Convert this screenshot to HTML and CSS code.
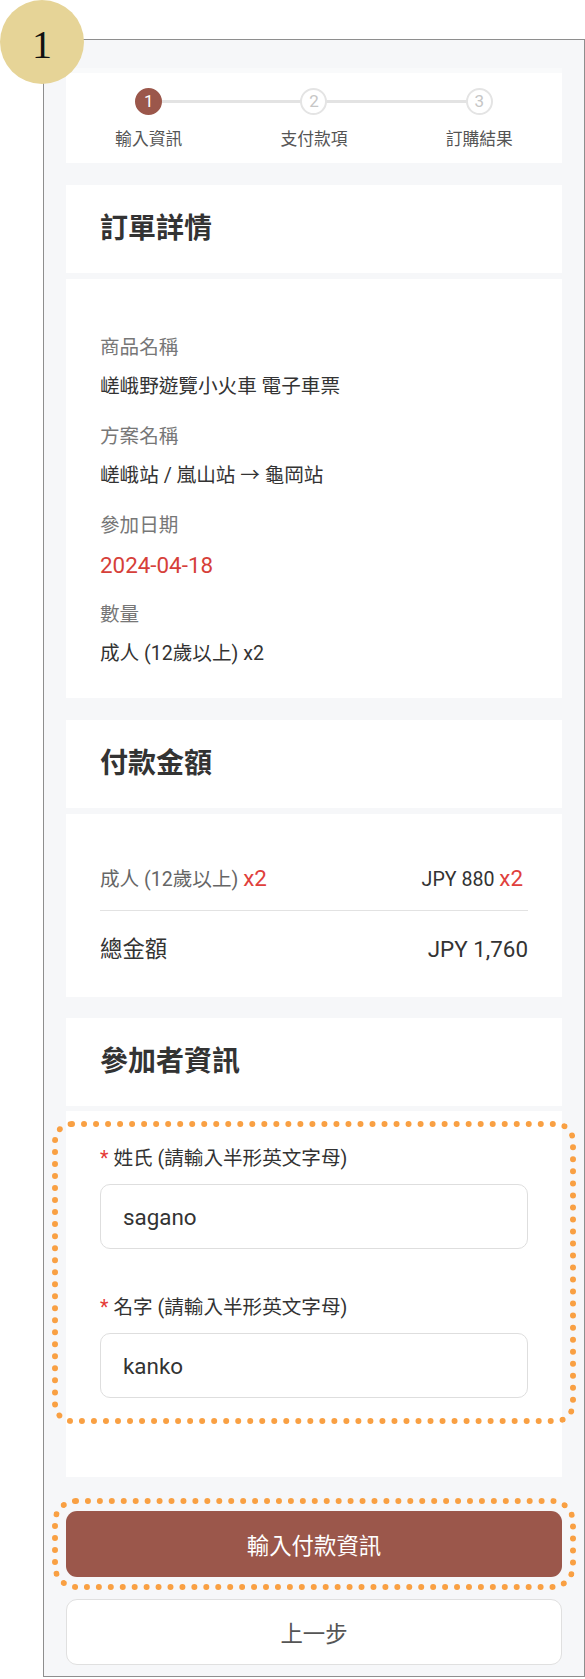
FILE: index.html
```html
<!DOCTYPE html>
<html lang="zh-Hant">
<head>
<meta charset="utf-8">
<title>輸入資訊</title>
<link rel="stylesheet" href="styles.css">
</head>
<body>
<div class="page">
  <div class="badge">1</div>
  <div class="frame">
    <div class="card stepper">
      <div class="step active"><span class="dot">1</span><span class="step-label">輸入資訊</span></div>
      <div class="step"><span class="dot">2</span><span class="step-label">支付款項</span></div>
      <div class="step"><span class="dot">3</span><span class="step-label">訂購結果</span></div>
    </div>

    <section class="section">
      <h2 class="card section-title">訂單詳情</h2>
      <div class="card details">
        <div class="item">
          <div class="item-label">商品名稱</div>
          <div class="item-value">嵯峨野遊覽小火車 電子車票</div>
        </div>
        <div class="item">
          <div class="item-label">方案名稱</div>
          <div class="item-value">嵯峨站 / 嵐山站 → 龜岡站</div>
        </div>
        <div class="item">
          <div class="item-label">參加日期</div>
          <div class="item-value date">2024-04-18</div>
        </div>
        <div class="item">
          <div class="item-label">數量</div>
          <div class="item-value">成人 (12歲以上) x2</div>
        </div>
      </div>
    </section>

    <section class="section section-price">
      <h2 class="card section-title">付款金額</h2>
      <div class="card price">
        <div class="price-row">
          <span class="name">成人 (12歲以上) <span class="qty">x2</span></span>
          <span class="amount">JPY 880 <span class="qty">x2</span></span>
        </div>
        <div class="total-row">
          <span>總金額</span>
          <span>JPY 1,760</span>
        </div>
      </div>
    </section>

    <section class="section section-last">
      <h2 class="card section-title">參加者資訊</h2>
      <div class="card form">
        <div class="fields">
          <label class="field">
            <span class="field-label"><span class="req">*</span>姓氏 (請輸入半形英文字母)</span>
            <input class="field-input" type="text" value="sagano">
          </label>
          <label class="field">
            <span class="field-label"><span class="req">*</span>名字 (請輸入半形英文字母)</span>
            <input class="field-input" type="text" value="kanko">
          </label>
        </div>
      </div>
    </section>

    <button class="btn btn-primary" type="button">輸入付款資訊</button>
    <button class="btn btn-secondary" type="button">上一步</button>
  </div>
</div>
</body>
</html>
```

FILE: styles.css
```css
* {
  box-sizing: border-box;
}

body {
  margin: 0;
  background: #ffffff;
  font-family: Roboto, "Noto Sans CJK TC", sans-serif;
  color: #333333;
}

.page {
  position: relative;
  padding: 39px 0 0 43px;
}

.badge {
  position: absolute;
  left: 0;
  top: 0;
  width: 84px;
  height: 84px;
  border-radius: 50%;
  background: #e6d497;
  display: flex;
  align-items: center;
  justify-content: center;
  padding-top: 6px;
  font-family: "Liberation Serif", serif;
  font-size: 40px;
  line-height: 1;
  color: #111111;
  z-index: 2;
}

.frame {
  width: 542px;
  border: 1px solid #8e8e8e;
  background: #f6f7f9;
  padding: 28px 22px 11px;
  display: flex;
  flex-direction: column;
}

.card {
  background: #ffffff;
}

/* Stepper */
.stepper {
  display: flex;
  border-top: 5px solid #f9fafb;
  padding: 15px 0 12px;
  margin-bottom: 22px;
}

.step {
  flex: 1;
  position: relative;
  display: flex;
  flex-direction: column;
  align-items: center;
}

.step + .step::before {
  content: "";
  position: absolute;
  top: 12px;
  left: -50%;
  right: 50%;
  height: 3px;
  background: #e3e3e3;
}

.dot {
  position: relative;
  z-index: 1;
  width: 27px;
  height: 27px;
  border-radius: 50%;
  border: 2px solid #e4e4e4;
  background: #ffffff;
  color: #c6c6c6;
  font-size: 17px;
  line-height: 1;
  display: flex;
  align-items: center;
  justify-content: center;
}

.step.active .dot {
  background: #9b574b;
  border-color: #9b574b;
  color: #ffffff;
}

.step-label {
  margin-top: 12px;
  font-size: 16.8px;
  line-height: 24px;
  color: #555555;
}

/* Sections */
.section {
  display: flex;
  flex-direction: column;
  gap: 6px;
  margin-bottom: 22px;
}

.section-price {
  margin-bottom: 21px;
}

.section-last {
  gap: 5px;
  margin-bottom: 34px;
}

.section-title {
  margin: 0;
  height: 88px;
  padding: 0 34px;
  display: flex;
  align-items: center;
  font-size: 28px;
  line-height: 40px;
  font-weight: 700;
  color: #333333;
}

/* Order details */
.details {
  padding: 55px 34px 30px;
  display: flex;
  flex-direction: column;
  gap: 22px;
}

.item-label {
  font-size: 19.6px;
  line-height: 28px;
  color: #777777;
}

.item-value {
  margin-top: 11px;
  font-size: 19.6px;
  line-height: 28px;
  color: #333333;
}

.item-value.date {
  color: #d63f3a;
  font-size: 22.4px;
}

/* Price */
.price {
  padding: 50px 34px 33px;
}

.price-row {
  display: flex;
  justify-content: space-between;
  align-items: baseline;
  line-height: 28px;
  padding: 0 5px 16px 0;
  border-bottom: 1px solid #e2e2e2;
  font-size: 19.6px;
}

.price-row .name {
  color: #666666;
}

.price-row .amount {
  color: #333333;
}

.qty {
  color: #e0403c;
  font-size: 22.4px;
}

.total-row {
  display: flex;
  justify-content: space-between;
  padding-top: 23px;
  line-height: 30px;
  font-size: 22.4px;
  color: #333333;
}

/* Form */
.form {
  padding: 34px 34px 79px;
}

.fields {
  position: relative;
  display: flex;
  flex-direction: column;
  gap: 45px;
}

.fields::after {
  content: "";
  position: absolute;
  top: -24px;
  bottom: -26px;
  left: -48px;
  right: -48px;
  border: 6px dotted #f9a043;
  border-radius: 20px;
  pointer-events: none;
}

.field {
  display: flex;
  flex-direction: column;
}

.field-label {
  font-size: 19.6px;
  line-height: 28px;
  color: #333333;
}

.req {
  color: #e53935;
  margin-right: 5px;
}

.field-input {
  margin-top: 11px;
  height: 65px;
  width: 100%;
  border: 1px solid #dedede;
  border-radius: 10px;
  padding: 0 22px;
  background: #ffffff;
  font-family: inherit;
  font-size: 22.4px;
  color: #333333;
  outline: none;
}

/* Buttons */
.btn {
  width: 100%;
  height: 66px;
  border-radius: 11px;
  display: flex;
  align-items: center;
  justify-content: center;
  font-family: inherit;
  font-size: 22.4px;
  padding: 0;
}

.btn-primary {
  position: relative;
  background: #9b574b;
  color: #ffffff;
  border: none;
  margin-bottom: 22px;
}

.btn-primary::after {
  content: "";
  position: absolute;
  top: -13px;
  bottom: -13px;
  left: -14px;
  right: -14px;
  border: 6px dotted #f9a043;
  border-radius: 24px;
  pointer-events: none;
}

.btn-secondary {
  background: #ffffff;
  border: 1px solid #e0e0e0;
  color: #555555;
}
```
